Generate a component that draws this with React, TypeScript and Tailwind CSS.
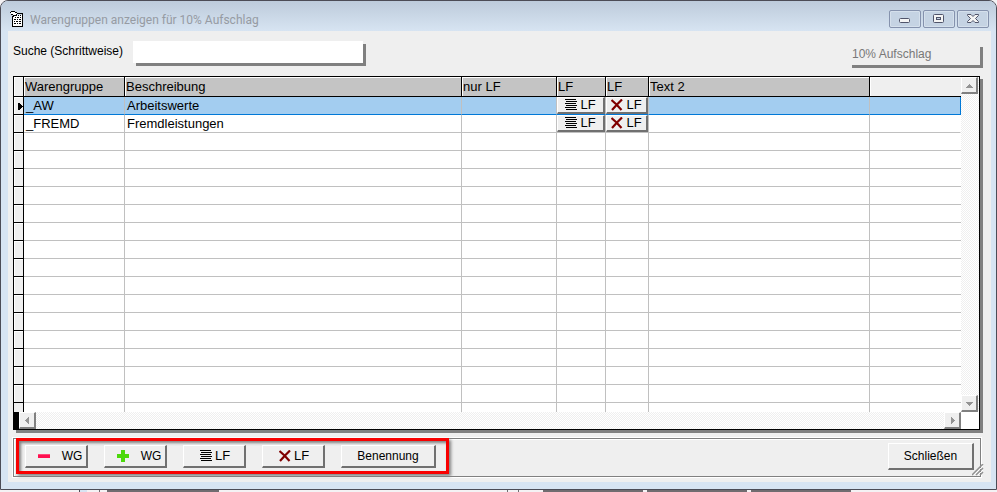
import React, { useState } from "react"
import clsx from "clsx"

type ProductGroup = {
  code: string;
  description: string;
};

const groups: ProductGroup[] = [
  { code: "_AW", description: "Arbeitswerte" },
  { code: "_FREMD", description: "Fremdleistungen" },
];

const emptyRows = Array.from({ length: 15 }, (_, i) => i);

const headers = ["Warengruppe", "Beschreibung", "nur LF", "LF", "LF", "Text 2"];

const WindowIcon = () => (
  <svg width="16" height="18" viewBox="0 0 16 18" shapeRendering="crispEdges" aria-hidden="true">
    <path d="M3 4h10v12H3z" fill="#fff" />
    <path d="M7 2h6v1H7zM12 2h1v14h-1zM2 15h11v1H2zM2 6h1v9H2zM1 0h4v1H1zM0 1h1v1H0zM5 1h2v1H5zM1 3h2v1H1zM6 3h1v2H6zM3 4h3v1H3zM2 5h2v1H2z" fill="#000" />
    <path d="M8 4h1v1H8zM10 4h1v1h-1zM5 6h1v1H5zM7 6h2v1H7zM10 6h1v1h-1zM4 8h2v1H4zM7 8h1v1H7zM9 8h2v1H9zM4 10h1v1H4zM6 10h2v1H6zM9 10h2v1H9zM4 12h2v1H4zM7 12h1v1H7zM9 12h2v1H9z" fill="#000" />
    <path d="M1 1h4v2H1zM5 2h2v1H5zM3 3h3v1H3z" fill="#fff" />
  </svg>
);

const LinesIcon = () => (
  <svg width="12" height="12" viewBox="0 0 12 12" shapeRendering="crispEdges" aria-hidden="true">
    <path d="M0 0h11v1H0zM1 2h11v1H1zM0 4h11v1H0zM1 6h11v1H1zM0 8h11v1H0zM1 10h11v1H1z" fill="#000" />
  </svg>
);

const CrossIcon = () => (
  <svg width="12" height="12" viewBox="0 0 12 12" aria-hidden="true">
    <path d="M.5 1L5.500 5.500L10.500 11M11 .5L6 5.500L1 11" fill="none" stroke="#800000" strokeWidth="2.200" />
  </svg>
);

const MinusIcon = () => (
  <svg width="12" height="12" viewBox="0 0 12 12" shapeRendering="crispEdges" aria-hidden="true">
    <path d="M0 4h12v4H0z" fill="#ff1050" />
    <path d="M0 4h12v1H0z" fill="#ff4878" />
  </svg>
);

const PlusIcon = () => (
  <svg width="12" height="12" viewBox="0 0 12 12" shapeRendering="crispEdges" aria-hidden="true">
    <path d="M4 0h4v4h4v4H8v4H4V8H0V4h4z" fill="#4cd80c" />
  </svg>
);

type Direction = "up" | "down" | "left" | "right";

const arrows: Record<Direction, string> = {
  up: "M4 3h1v1h1v1h1v1h1v1H1V6h1V5h1V4h1z",
  down: "M1 3h7v1H7v1H6v1H5v1H4V6H3V5H2V4H1z",
  left: "M6 1v7H5V7H4V6H3V5H2V4h1V3h1V2h1V1z",
  right: "M3 1v7h1V7h1V6h1V5h1V4H6V3H5V2H4V1z",
};

const ScrollButton = ({ direction, label }: { direction: Direction; label: string }) => (
  <button
    type="button"
    aria-label={label}
    className="flex h-[17px] w-[17px] shrink-0 items-center justify-center border-t border-l border-r-2 border-b-2 border-t-white border-l-white border-r-[#808080] border-b-[#808080] bg-[#efefef]"
  >
    <svg width="9" height="9" viewBox="0 0 9 9" shapeRendering="crispEdges" aria-hidden="true">
      <path d={arrows[direction]} fill="#949494" />
    </svg>
  </button>
);

type PushButtonProps = {
  className?: string;
  children: React.ReactNode;
};

const PushButton = ({ className, children }: PushButtonProps) => (
  <button
    type="button"
    className={clsx(
      "flex items-center justify-center border-t border-l border-r-2 border-b-2 border-t-white border-l-white border-r-[#707070] border-b-[#707070] bg-[#efefef] whitespace-nowrap",
      className
    )}
  >
    {children}
  </button>
);

const CaptionButton = ({ label, children }: { label: string; children: React.ReactNode }) => (
  <button
    type="button"
    aria-label={label}
    className="flex h-[18px] w-8 items-center justify-center rounded-xs border border-[#8592ad] bg-[#c5d3e3] shadow-[inset_0_0_0_1px_#d5e0ec]"
  >
    {children}
  </button>
);

const TitleBar = () => (
  <header className="flex h-[30px] items-start justify-between bg-linear-to-b from-[#bdcbdb] to-[#d7e4f2] pt-[9px] pr-[7px] pl-[9px]">
    <div className="flex items-center gap-1">
      <WindowIcon />
      <h1 className="font-[Roboto,sans-serif] text-[12px] leading-5 text-[#969ba3]">
        Warengruppen anzeigen für 10% Aufschlag
      </h1>
    </div>
    <div className="flex gap-0.5">
      <CaptionButton label="Minimieren">
        <svg width="12" height="12" viewBox="0 0 12 12" aria-hidden="true">
          <rect x=".5" y="5.500" width="10" height="4" rx="1" fill="#f4f4f4" stroke="#50546a" />
        </svg>
      </CaptionButton>
      <CaptionButton label="Maximieren">
        <svg width="12" height="12" viewBox="0 0 12 12" aria-hidden="true">
          <rect x=".5" y="1.500" width="10" height="8" rx="1" fill="#f4f4f4" stroke="#50546a" />
          <rect x="3.500" y="4.500" width="4" height="2" fill="#c5d3e3" stroke="#50546a" />
        </svg>
      </CaptionButton>
      <CaptionButton label="Fenster schließen">
        <svg width="12" height="12" viewBox="0 0 12 12" aria-hidden="true">
          <path d="M.5 1.500h3.500l2 2 2-2h3.500v1L8.500 5.500l3 3v1H8l-2-2-2 2H.5v-1l3-3-3-3z" fill="#f4f4f4" stroke="#50546a" />
        </svg>
      </CaptionButton>
    </div>
  </header>
);

const selectorCell = "border-r border-b border-black bg-[#efefef] p-0 shadow-[inset_1px_1px_0_#fff]";
const gridCell = "overflow-hidden border-r border-b border-[#c0c0c0] text-left whitespace-nowrap";

const GroupTable = () => {
  const [selected, setSelected] = useState(0);

  return (
    <table className="w-full table-fixed border-separate border-spacing-0 bg-white leading-4">
      <colgroup>
        <col className="w-[10px]" />
        <col className="w-[101px]" />
        <col className="w-[337px]" />
        <col className="w-[95px]" />
        <col className="w-[49px]" />
        <col className="w-[43px]" />
        <col className="w-[221px]" />
        <col />
      </colgroup>
      <thead>
        <tr className="h-5">
          <td className={selectorCell} />
          {headers.map((header, i) => (
            <th
              key={i}
              scope="col"
              className="overflow-hidden border-r border-b border-black bg-[#c4c4c4] p-0 pl-px text-left font-normal whitespace-nowrap shadow-[inset_1px_1px_0_#fff]"
            >
              {header}
            </th>
          ))}
          <td className="border-b border-black bg-[#efefef] p-0 shadow-[inset_1px_1px_0_#fff]" />
        </tr>
      </thead>
      <tbody>
        {groups.map((group, i) => {
          const active = i === selected;
          const cell = clsx(gridCell, active && "border-b-[#0078d7] bg-[#a3cdf0]");
          return (
            <tr key={group.code} className="h-[18px]" onClick={() => setSelected(i)}>
              <td className={selectorCell}>
                {active && (
                  <svg className="ml-1" width="5" height="11" viewBox="0 0 5 11" shapeRendering="crispEdges" aria-hidden="true">
                    <path d="M0 3h2v1h1v1h1v1h1v1H4v1H3v1H2v1H0z" fill="#000" />
                  </svg>
                )}
              </td>
              <td className={clsx(cell, "p-0 pl-0.5")}>{group.code}</td>
              <td className={clsx(cell, "p-0 pl-0.5")}>{group.description}</td>
              <td className={clsx(cell, "p-0")} />
              <td className={clsx(cell, "p-0")}>
                <PushButton className="h-[17px] w-full gap-[3px]">
                  <LinesIcon />
                  LF
                </PushButton>
              </td>
              <td className={clsx(cell, "p-0")}>
                <PushButton className="h-[17px] w-full gap-[3px]">
                  <CrossIcon />
                  LF
                </PushButton>
              </td>
              <td className={clsx(cell, "p-0")} />
              <td className={clsx(cell, "p-0", active ? "border-r-[#0078d7]" : "border-r-white")} />
            </tr>
          );
        })}
        {emptyRows.map((row) => (
          <tr key={row} className="h-[18px]">
            <td className={selectorCell} />
            {headers.map((_, i) => (
              <td key={i} className={clsx(gridCell, "p-0")} />
            ))}
            <td className="border-b border-[#c0c0c0] p-0" />
          </tr>
        ))}
        {/* last row is cut off by the scroll bar */}
        <tr className="h-[9px]">
          <td className="border-r border-black bg-[#efefef] p-0" />
          {headers.map((_, i) => (
            <td key={i} className="border-r border-[#c0c0c0] p-0" />
          ))}
          <td className="p-0" />
        </tr>
      </tbody>
    </table>
  );
};

const scrollTrack = "bg-[repeating-conic-gradient(#ffffff_0_25%,#efefef_0_50%)] bg-size-[2px_2px]";

const App: React.FC = () => {
  const [search, setSearch] = useState("");

  return (
    <div className="bg-[#f4f2f4] font-['Liberation_Sans',Arial,sans-serif] text-[13px] text-black">
      <div className="overflow-hidden rounded-t-lg border border-[#4c4c56] bg-[#d7e4f2]">
        <TitleBar />
        <main className="mr-[5px] mb-[7px] ml-[7px] bg-[#efefef] pt-[10px] pr-[11px] pb-[5px] pl-[5px]">
          <div className="flex items-start justify-between">
            <div className="flex items-start">
              <label htmlFor="search" className="w-[120px] text-[12px] leading-5 whitespace-nowrap">
                Suche (Schrittweise)
              </label>
              <input
                id="search"
                type="text"
                value={search}
                onChange={(e) => setSearch(e.target.value)}
                className="h-[22px] w-[230px] bg-white px-1 shadow-[3px_3px_0_#808080] outline-none"
              />
            </div>
            <div className="mt-[3px] h-[21px] w-[131px] bg-[#efefef] pl-[3px] text-[12px] leading-5 text-[#787878] shadow-[3px_3px_0_#808080]">
              10% Aufschlag
            </div>
          </div>

          <section className="mt-[11px] border border-black bg-white shadow-[3px_3px_0_#808080]">
            <div className="flex">
              <div className="min-w-0 flex-1">
                <GroupTable />
              </div>
              <div className={clsx("flex w-[18px] flex-col justify-between", scrollTrack)}>
                <ScrollButton direction="up" label="Nach oben" />
                <ScrollButton direction="down" label="Nach unten" />
              </div>
            </div>
            <div className="flex">
              <div className="w-[5px] bg-black" />
              <div className={clsx("flex flex-1 justify-between", scrollTrack)}>
                <ScrollButton direction="left" label="Nach links" />
                <ScrollButton direction="right" label="Nach rechts" />
              </div>
              <div className="w-[18px] bg-white" />
            </div>
          </section>

          <footer className="relative mt-2 -mr-px flex items-start justify-between border border-[#808080] pr-[6px] pl-0.5 shadow-[0_0_0_1px_#fff,inset_1px_1px_0_#fff]">
            <div className="-mt-px flex gap-4 border-3 border-[#f80000] pt-1 pr-[10px] pb-[3px] pl-[6px] shadow-[2px_2px_3px_#808080,inset_2px_2px_3px_#808080]">
              <PushButton className="h-[23px] w-[63px] gap-3 pl-2 text-[12px]">
                <MinusIcon />
                WG
              </PushButton>
              <PushButton className="h-[23px] w-[63px] gap-3 pl-2 text-[12px]">
                <PlusIcon />
                WG
              </PushButton>
              <PushButton className="h-[23px] w-[63px] gap-[3px] pl-0.5">
                <LinesIcon />
                LF
              </PushButton>
              <PushButton className="h-[23px] w-[63px] gap-[3px] pl-0.5">
                <CrossIcon />
                LF
              </PushButton>
              <PushButton className="h-[23px] w-[95px] text-[12px]">Benennung</PushButton>
            </div>
            <PushButton className="mt-1 mb-[6px] h-[27px] w-[86px] text-[12px]">Schließen</PushButton>
            <svg className="absolute -right-1 bottom-0" width="12" height="12" viewBox="0 0 12 12" aria-hidden="true">
              <path d="M0 11L11 0M4 11L11 4M8 11L11 8" stroke="#909090" strokeWidth="1.500" />
              <path d="M2 11L11 2M6 11L11 6" stroke="#fff" />
            </svg>
          </footer>
        </main>
      </div>
      {/* edge of the window behind */}
      <div className="flex h-0.5 pl-[79px]">
        <div className="w-2 border-l border-[#4c4c56] bg-[#d7e4f2]" />
        <div className="ml-3 w-px bg-[#706c70]" />
        <div className="ml-[7px] w-28 bg-[#706c70]" />
        <div className="ml-[288px] w-3 border-x border-[#706c70]" />
        <div className="ml-6 w-[100px] bg-[#706c70]" />
        <div className="ml-1 w-[100px] bg-[#706c70]" />
        <div className="ml-1 w-[100px] bg-[#706c70]" />
      </div>
    </div>
  );
};

export default App;
